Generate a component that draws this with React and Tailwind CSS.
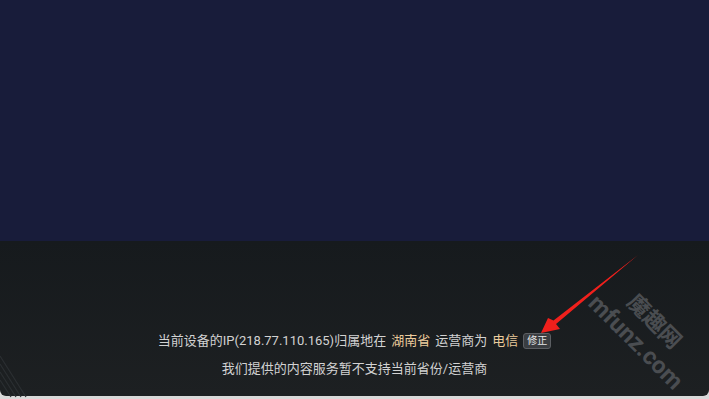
const Arrow = () => (
  <svg
    className="pointer-events-none absolute inset-0"
    width="709"
    height="399"
    viewBox="0 0 709 399"
  >
    <polygon
      points="541,333 548,318 553.5,320.5 638,255 556,324 560,329"
      fill="#f0201c"
    />
    {/* faint corner stripes */}
    <g stroke="#2b2f32" strokeWidth="1.2">
      <line x1="0" y1="356" x2="26" y2="397" />
      <line x1="0" y1="364" x2="21" y2="397" />
      <line x1="0" y1="372" x2="16" y2="397" />
      <line x1="0" y1="380" x2="11" y2="397" />
    </g>
  </svg>
);

const Watermark = () => (
  <div className="pointer-events-none absolute left-0 top-0 font-bold text-[#4a4d51]">
    <div className="absolute left-[612px] top-[311px] w-[84px] rotate-45 text-center text-[22px] leading-none tracking-[0px]">
      魔趣网
    </div>
    <div className="absolute left-[572px] top-[330px] w-[128px] rotate-45 text-center text-[24px] leading-none">
      mfunz.com
    </div>
  </div>
);

export default function App() {
  return (
    <div
      className="relative flex h-[399px] w-[709px] flex-col overflow-hidden bg-[#d9d9d9]"
      style={{ fontFamily: 'Roboto, "Noto Sans CJK SC", sans-serif' }}
    >
      <div className="h-[241px] bg-[#181c3a]" />
      <div className="flex h-[155px] flex-col items-center justify-end rounded-b-[6px] bg-gradient-to-b from-[#161a1d] to-[#1d2022] pb-[18px]">
        <div className="flex items-center text-[13px] text-[#d2d2d2]">
          <span>当前设备的IP(218.77.110.165)归属地在</span>
          <span className="ml-[5px] text-[#ebcb9c]">湖南省</span>
          <span className="ml-[5px]">运营商为</span>
          <span className="ml-[5px] text-[#ebcb9c]">电信</span>
          <span className="ml-[5px] rounded-[3px] border border-[#5c5f63] bg-[#3a3d41] px-[3px] text-[10px] leading-[14px] text-[#e6e6e6]">
            修正
          </span>
        </div>
        <div className="mt-[8px] text-[13px] text-[#d2d2d2]">
          我们提供的内容服务暂不支持当前省份/运营商
        </div>
      </div>
      <Watermark />
      <Arrow />
    </div>
  );
}
